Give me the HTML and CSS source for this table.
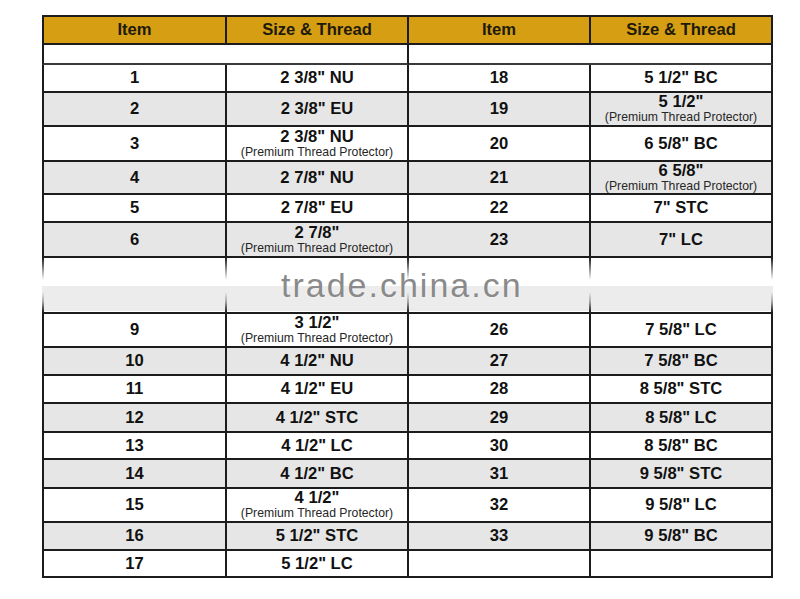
FILE: index.html
```html
<!DOCTYPE html>
<html>
<head>
<meta charset="utf-8">
<link rel="stylesheet" href="styles.css">
</head>
<body>
<div class="sheet">
  <div class="row head">
    <div class="cell">Item</div><div class="cell">Size &amp; Thread</div><div class="cell">Item</div><div class="cell">Size &amp; Thread</div>
  </div>
  <div class="row blank">
    <div class="cell span2"></div><div class="cell span2"></div>
  </div>
  <div class="row">
    <div class="cell">1</div><div class="cell">2 3/8&quot; NU</div><div class="cell">18</div><div class="cell">5 1/2&quot; BC</div>
  </div>
  <div class="row gray">
    <div class="cell">2</div><div class="cell">2 3/8&quot; EU</div><div class="cell">19</div><div class="cell"><span class="main">5 1/2&quot;</span><span class="sub">(Premium Thread Protector)</span></div>
  </div>
  <div class="row">
    <div class="cell">3</div><div class="cell"><span class="main">2 3/8&quot; NU</span><span class="sub">(Premium Thread Protector)</span></div><div class="cell">20</div><div class="cell">6 5/8&quot; BC</div>
  </div>
  <div class="row gray">
    <div class="cell">4</div><div class="cell">2 7/8&quot; NU</div><div class="cell">21</div><div class="cell"><span class="main">6 5/8&quot;</span><span class="sub">(Premium Thread Protector)</span></div>
  </div>
  <div class="row">
    <div class="cell">5</div><div class="cell">2 7/8&quot; EU</div><div class="cell">22</div><div class="cell">7&quot; STC</div>
  </div>
  <div class="row gray">
    <div class="cell">6</div><div class="cell"><span class="main">2 7/8&quot;</span><span class="sub">(Premium Thread Protector)</span></div><div class="cell">23</div><div class="cell">7&quot; LC</div>
  </div>
  <div class="row band">
    <div class="cell"></div><div class="cell"></div><div class="cell"></div><div class="cell"></div>
  </div>
  <div class="row">
    <div class="cell">9</div><div class="cell"><span class="main">3 1/2&quot;</span><span class="sub">(Premium Thread Protector)</span></div><div class="cell">26</div><div class="cell">7 5/8&quot; LC</div>
  </div>
  <div class="row gray">
    <div class="cell">10</div><div class="cell">4 1/2&quot; NU</div><div class="cell">27</div><div class="cell">7 5/8&quot; BC</div>
  </div>
  <div class="row">
    <div class="cell">11</div><div class="cell">4 1/2&quot; EU</div><div class="cell">28</div><div class="cell">8 5/8&quot; STC</div>
  </div>
  <div class="row gray">
    <div class="cell">12</div><div class="cell">4 1/2&quot; STC</div><div class="cell">29</div><div class="cell">8 5/8&quot; LC</div>
  </div>
  <div class="row">
    <div class="cell">13</div><div class="cell">4 1/2&quot; LC</div><div class="cell">30</div><div class="cell">8 5/8&quot; BC</div>
  </div>
  <div class="row gray">
    <div class="cell">14</div><div class="cell">4 1/2&quot; BC</div><div class="cell">31</div><div class="cell">9 5/8&quot; STC</div>
  </div>
  <div class="row">
    <div class="cell">15</div><div class="cell"><span class="main">4 1/2&quot;</span><span class="sub">(Premium Thread Protector)</span></div><div class="cell">32</div><div class="cell">9 5/8&quot; LC</div>
  </div>
  <div class="row gray">
    <div class="cell">16</div><div class="cell">5 1/2&quot; STC</div><div class="cell">33</div><div class="cell">9 5/8&quot; BC</div>
  </div>
  <div class="row">
    <div class="cell">17</div><div class="cell">5 1/2&quot; LC</div><div class="cell"></div><div class="cell"></div>
  </div>
  <div class="watermark">trade.china.cn</div>
</div>
</body>
</html>
```
FILE: styles.css
```css
html, body {
  margin: 0;
  padding: 0;
  background: #ffffff;
}

body {
  font-family: "Liberation Sans", Arial, sans-serif;
  color: #111111;
}

.sheet {
  position: relative;
  margin: 15px 0 0 42px;
  width: 731px;
  border-top: 2px solid #1c1c1c;
  display: grid;
  grid-template-columns: 185px 182px 182px 182px;
  grid-template-rows: 28px 20px 28px 34px 35px 33px 28px 35px 28px 28px 34px 28px 28px 29px 27px 29px 34px 28px 27px;
}

.row {
  display: contents;
}

.cell {
  box-sizing: border-box;
  border-right: 2px solid #1c1c1c;
  border-bottom: 2px solid #1c1c1c;
  display: flex;
  flex-direction: column;
  align-items: center;
  justify-content: center;
  font-size: 16.6px;
  font-weight: bold;
  line-height: 16px;
  text-align: center;
  background: #ffffff;
}

.row > .cell:first-child {
  border-left: 2px solid #1c1c1c;
}

.head .cell {
  background: #d69e12;
  color: #201a0a;
  font-size: 16.6px;
}

.gray .cell {
  background: #e6e6e6;
}

.span2 {
  grid-column: span 2;
}

.blank .cell {
  border-bottom-color: #3a3a3a;
}

.main {
  display: block;
  line-height: 16px;
}

.sub {
  display: block;
  font-size: 12.25px;
  font-weight: normal;
  line-height: 14px;
  color: #262626;
}

.band .cell {
  grid-row: span 2;
  border-right-color: transparent;
  background:
    linear-gradient(to bottom, #1c1c1c 0, rgba(28,28,28,0.35) 14px, rgba(28,28,28,0) 22px, rgba(28,28,28,0) 34px, rgba(28,28,28,0.35) 44px, #1c1c1c 54px) right top / 2px 100% no-repeat,
    linear-gradient(to bottom, #ffffff 0, #ffffff 28px, #ececec 28px, #ececec 53px, #ffffff 53px);
  background-origin: border-box;
}

.band .cell:first-child {
  border-left-color: transparent;
  background:
    linear-gradient(to bottom, #1c1c1c 0, rgba(28,28,28,0.35) 14px, rgba(28,28,28,0) 22px, rgba(28,28,28,0) 34px, rgba(28,28,28,0.35) 44px, #1c1c1c 54px) right top / 2px 100% no-repeat,
    linear-gradient(to bottom, #1c1c1c 0, rgba(28,28,28,0.35) 14px, rgba(28,28,28,0) 22px, rgba(28,28,28,0) 34px, rgba(28,28,28,0.35) 44px, #1c1c1c 54px) left top / 2px 100% no-repeat,
    linear-gradient(to bottom, #ffffff 0, #ffffff 28px, #ececec 28px, #ececec 53px, #ffffff 53px);
  background-origin: border-box;
}

.watermark {
  position: absolute;
  left: 239px;
  top: 251px;
  font-size: 34px;
  line-height: 34px;
  letter-spacing: 2px;
  font-weight: normal;
  color: #8a8a8a;
  text-shadow: 0 0 2px rgba(255,255,255,0.8);
  white-space: nowrap;
}
```
